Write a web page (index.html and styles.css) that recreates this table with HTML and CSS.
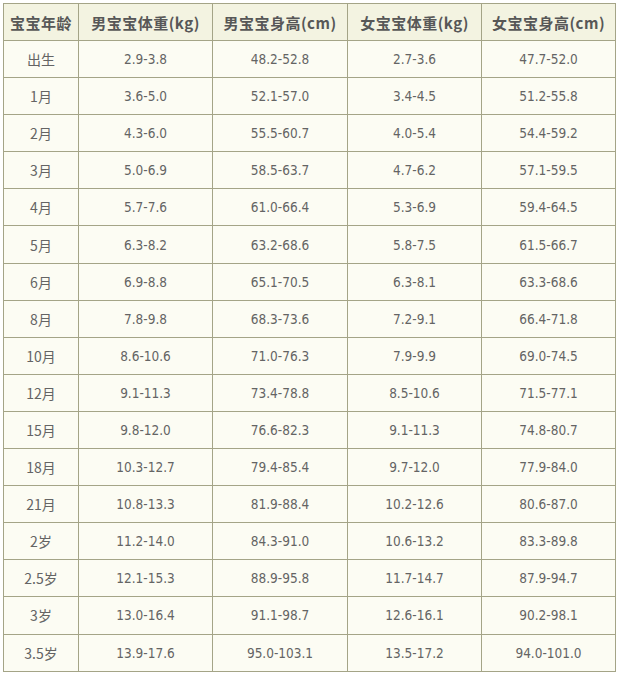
FILE: index.html
```html
<!DOCTYPE html>
<html lang="zh">
<head>
<meta charset="utf-8">
<title>宝宝身高体重标准表</title>
<link rel="stylesheet" href="styles.css">
</head>
<body>
<table class="chart">
  <colgroup>
    <col class="c-age">
    <col class="c-a">
    <col class="c-b">
    <col class="c-a">
    <col class="c-a">
  </colgroup>
  <thead>
    <tr><th>宝宝年龄</th><th>男宝宝体重(kg)</th><th>男宝宝身高(cm)</th><th>女宝宝体重(kg)</th><th>女宝宝身高(cm)</th></tr>
  </thead>
  <tbody>
    <tr><td>出生</td><td>2.9-3.8</td><td>48.2-52.8</td><td>2.7-3.6</td><td>47.7-52.0</td></tr>
    <tr><td>1月</td><td>3.6-5.0</td><td>52.1-57.0</td><td>3.4-4.5</td><td>51.2-55.8</td></tr>
    <tr><td>2月</td><td>4.3-6.0</td><td>55.5-60.7</td><td>4.0-5.4</td><td>54.4-59.2</td></tr>
    <tr><td>3月</td><td>5.0-6.9</td><td>58.5-63.7</td><td>4.7-6.2</td><td>57.1-59.5</td></tr>
    <tr><td>4月</td><td>5.7-7.6</td><td>61.0-66.4</td><td>5.3-6.9</td><td>59.4-64.5</td></tr>
    <tr><td>5月</td><td>6.3-8.2</td><td>63.2-68.6</td><td>5.8-7.5</td><td>61.5-66.7</td></tr>
    <tr><td>6月</td><td>6.9-8.8</td><td>65.1-70.5</td><td>6.3-8.1</td><td>63.3-68.6</td></tr>
    <tr><td>8月</td><td>7.8-9.8</td><td>68.3-73.6</td><td>7.2-9.1</td><td>66.4-71.8</td></tr>
    <tr><td>10月</td><td>8.6-10.6</td><td>71.0-76.3</td><td>7.9-9.9</td><td>69.0-74.5</td></tr>
    <tr><td>12月</td><td>9.1-11.3</td><td>73.4-78.8</td><td>8.5-10.6</td><td>71.5-77.1</td></tr>
    <tr><td>15月</td><td>9.8-12.0</td><td>76.6-82.3</td><td>9.1-11.3</td><td>74.8-80.7</td></tr>
    <tr><td>18月</td><td>10.3-12.7</td><td>79.4-85.4</td><td>9.7-12.0</td><td>77.9-84.0</td></tr>
    <tr><td>21月</td><td>10.8-13.3</td><td>81.9-88.4</td><td>10.2-12.6</td><td>80.6-87.0</td></tr>
    <tr><td>2岁</td><td>11.2-14.0</td><td>84.3-91.0</td><td>10.6-13.2</td><td>83.3-89.8</td></tr>
    <tr><td>2.5岁</td><td>12.1-15.3</td><td>88.9-95.8</td><td>11.7-14.7</td><td>87.9-94.7</td></tr>
    <tr><td>3岁</td><td>13.0-16.4</td><td>91.1-98.7</td><td>12.6-16.1</td><td>90.2-98.1</td></tr>
    <tr><td>3.5岁</td><td>13.9-17.6</td><td>95.0-103.1</td><td>13.5-17.2</td><td>94.0-101.0</td></tr>
  </tbody>
</table>
</body>
</html>
```

FILE: styles.css
```css
html, body {
  margin: 0;
  padding: 0;
  background: #ffffff;
}
body {
  padding: 3px 0 0 3px;
}
.chart {
  border-collapse: collapse;
  table-layout: fixed;
  width: 613px;
  font-family: "DejaVu Sans", "Noto Sans CJK SC", sans-serif;
  font-stretch: condensed;
  color: #646464;
}
.c-age { width: 75px; }
.c-a { width: 134px; }
.c-b { width: 135px; }
.chart th,
.chart td {
  border: 1px solid #a4a487;
  text-align: center;
  vertical-align: middle;
  padding: 0;
  white-space: nowrap;
}
.chart th {
  height: 36px;
  background: #f3f3e1;
  font-weight: 700;
  color: #575757;
}
.chart th,
.chart td:first-child {
  font-family: "Noto Sans CJK SC", sans-serif;
  font-stretch: normal;
}
.chart th {
  font-size: 15px;
  letter-spacing: 0.5px;
}
.chart td {
  height: 36.1px;
  background: #fcfcf3;
  font-size: 13.5px;
}
.chart td:first-child {
  font-size: 14px;
}
```
